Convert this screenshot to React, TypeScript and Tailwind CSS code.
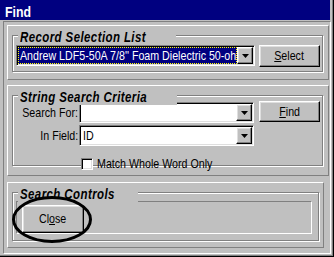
import type { ReactNode } from "react";

const raised =
  "border border-t-white border-l-white border-r-black border-b-black shadow-[inset_-1px_-1px_0_#808080,inset_1px_1px_0_#dfdfdf]";
const sunken =
  "border border-t-[#808080] border-l-[#808080] border-r-white border-b-white shadow-[inset_1px_1px_0_#000,inset_-1px_-1px_0_#dfdfdf]";
const etched = "relative border border-[#808080] shadow-[inset_1px_1px_0_#fff,1px_1px_0_#fff]";
const panel = "border border-t-white border-l-white border-r-[#808080] border-b-[#808080]";

// the dialog font is a tall, narrow sans; squeeze Liberation Sans to match
function N({ children, origin = "origin-left" }: { children: ReactNode; origin?: string }) {
  return <span className={`inline-block whitespace-nowrap scale-x-[0.82] ${origin}`}>{children}</span>;
}

function GroupTitle({ children }: { children: ReactNode }) {
  return (
    <span className="absolute left-[5px] top-[-7px] flex bg-[#c0c0c0] px-[2px] text-[14px] leading-[16px] font-bold italic tracking-[0.5px]">
      <N>{children}</N>
    </span>
  );
}

function Arrow() {
  return (
    <div className={`${raised} w-[16px] h-[17px] bg-[#c0c0c0] flex items-center justify-center shrink-0`}>
      <svg width="7" height="4" viewBox="0 0 7 4">
        <path d="M0 0h7L3.5 4z" fill="#000" />
      </svg>
    </div>
  );
}

function Button({ className, children }: { className: string; children: ReactNode }) {
  return (
    <div className={`${raised} ${className} bg-[#c0c0c0] flex items-center justify-center shrink-0`}>
      <N origin="origin-center">{children}</N>
    </div>
  );
}

function Label({ children }: { children: ReactNode }) {
  return (
    <div className="w-[66px] shrink-0 pr-[1px] flex justify-end overflow-visible">
      <N origin="origin-right">{children}</N>
    </div>
  );
}

export default function App() {
  return (
    <div className="relative w-[334px] h-[257px] overflow-hidden bg-[#c0c0c0] border-r border-b border-black font-['Liberation_Sans',Arial,sans-serif] text-[13px] leading-[16px] text-black">
      <div className="h-full flex flex-col border-r border-b border-[#808080]">
        {/* title bar */}
        <div className="h-[20px] mr-[2px] shrink-0 bg-[#000080] pl-[5px] pt-[3px] text-[15px] leading-[17px] font-bold text-white">
          <N>Find</N>
        </div>

        <div className="h-[233px] ml-[3px] mr-[1px] mt-[1px] flex flex-col border border-t-[#808080] border-l-[#808080] border-r-white border-b-white pl-[3px] pr-[1px] pt-[3px]">
          {/* Record Selection List */}
          <div className={`${panel} h-[55px] shrink-0`}>
            <div className={`${etched} h-[37px] mt-[9px] ml-[4px] mr-[5px]`}>
              <GroupTitle>Record Selection List</GroupTitle>
              <div className="flex gap-[4px] pl-[3px] pt-[9px]">
                <div className={`${sunken} w-[239px] h-[21px] shrink-0 bg-white p-[1px] flex`}>
                  <div className="w-[220px] h-[17px] bg-[#000080] border border-dotted border-[#ffff00] overflow-hidden text-white pl-[1px] leading-[15px]">
                    <N>Andrew LDF5-50A 7/8'' Foam Dielectric 50-ohm Cable</N>
                  </div>
                  <Arrow />
                </div>
                <Button className="w-[61px] h-[22px]">
                  <span className="underline">S</span>elect
                </Button>
              </div>
            </div>
          </div>

          {/* String Search Criteria */}
          <div className={`${panel} h-[91px] mt-[5px] shrink-0`}>
            <div className={`${etched} h-[71px] mt-[9px] ml-[4px] mr-[5px]`}>
              <GroupTitle>String Search Criteria</GroupTitle>
              <div className="flex items-start mt-[5px]">
                <div className="mt-[4px]">
                  <Label>Search For:</Label>
                </div>
                <div className={`${sunken} w-[175px] h-[21px] shrink-0 mt-[1px] bg-white p-[1px] flex`}>
                  <div className="flex-1" />
                  <Arrow />
                </div>
                <Button className="w-[61px] h-[21px] ml-[5px]">
                  <span className="underline">F</span>ind
                </Button>
              </div>
              <div className="flex items-start mt-[2px]">
                <div className="mt-[3px]">
                  <Label>In Field:</Label>
                </div>
                <div className={`${sunken} w-[175px] h-[21px] shrink-0 bg-white p-[1px] flex`}>
                  <div className="flex-1 pl-[2px] leading-[17px]">
                    <N>ID</N>
                  </div>
                  <Arrow />
                </div>
              </div>
              <div className="flex items-center mt-[10px] ml-[68px]">
                <div className={`${sunken} w-[12px] h-[12px] bg-white shrink-0`} />
                <span className="ml-[4px]">
                  <N>Match Whole Word Only</N>
                </span>
              </div>
            </div>
          </div>

          {/* Search Controls */}
          <div className={`${panel} h-[66px] mt-[6px] mr-[5px] shrink-0`}>
            <div className={`${etched} h-[49px] mt-[9px] ml-[4px] mr-[4px]`}>
              <GroupTitle>Search Controls</GroupTitle>
              <div className="w-[296px] h-[33px] ml-[3px] mt-[8px] border border-t-[#808080] border-l-[#808080] border-r-white border-b-white">
                <Button className="w-[62px] h-[28px] ml-[5px] mt-[3px]">
                  Cl<span className="underline">o</span>se
                </Button>
              </div>
            </div>
          </div>
        </div>
      </div>

      {/* hand-drawn circle round the Close button */}
      <svg className="absolute left-[10px] top-[194px]" width="84" height="52" viewBox="0 0 84 52">
        <ellipse cx="42" cy="25.5" rx="38.5" ry="22" fill="none" stroke="#000" strokeWidth="3" />
      </svg>
    </div>
  );
}
